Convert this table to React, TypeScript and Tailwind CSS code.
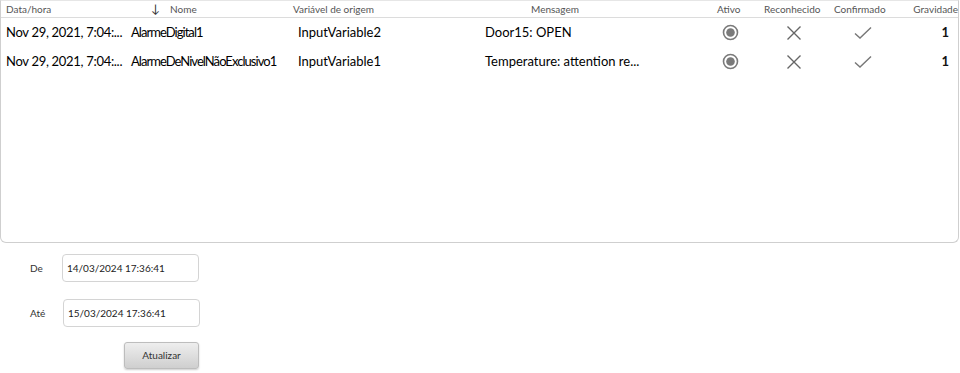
const rows = [
  {
    time: "Nov 29, 2021, 7:04:...",
    name: "AlarmeDigital1",
    source: "InputVariable2",
    message: "Door15: OPEN",
    severity: 1,
  },
  {
    time: "Nov 29, 2021, 7:04:...",
    name: "AlarmeDeNivelNãoExclusivo1",
    source: "InputVariable1",
    message: "Temperature: attention re...",
    severity: 1,
  },
];

function RadioOn() {
  return (
    <svg width="17" height="17" viewBox="0 0 17 17">
      <circle cx="8.5" cy="8.5" r="7" fill="none" stroke="#7a7a7a" strokeWidth="1.6" />
      <circle cx="8.5" cy="8.5" r="4.3" fill="#7a7a7a" />
    </svg>
  );
}

function Cross() {
  return (
    <svg width="16" height="16" viewBox="0 0 16 16">
      <path d="M1.5 1.5 L14.5 14.5 M14.5 1.5 L1.5 14.5" stroke="#666" strokeWidth="1.4" fill="none" />
    </svg>
  );
}

function Check() {
  return (
    <svg width="18" height="14" viewBox="0 0 18 14">
      <path d="M1 7.5 L6 12 L17 1.5" stroke="#777" strokeWidth="1.4" fill="none" />
    </svg>
  );
}

export default function App() {
  return (
    <div className="h-[373px] w-[960px] bg-white font-['Lato',sans-serif] text-black">
      <div className="flex h-[243px] w-[959px] flex-col rounded-b-[6px] border border-t-[#e6e6e6] border-[#cfcfcf]">
        {/* header */}
        <div className="flex h-[17px] items-center border-b border-[#dcdcdc] text-[10px] text-[#555]">
          <div className="w-[127px] pl-[5px]">Data/hora</div>
          <div className="flex w-[165px] items-center pl-[23px]">
            <span className="mr-[10px] text-[12px] text-[#333]">↓</span>Nome
          </div>
          <div className="w-[188px]">Variável de origem</div>
          <div className="w-[220px] pl-[50px]">Mensagem</div>
          <div className="w-[55px] pl-[16px]">Ativo</div>
          <div className="w-[73px] pl-[8px]">Reconhecido</div>
          <div className="w-[67px] pl-[5px]">Confirmado</div>
          <div className="w-[62px] text-right">Gravidade</div>
        </div>
        {rows.map((r) => (
          <div key={r.name} className="flex h-[29px] items-center text-[13px]">
            <div className="w-[127px] whitespace-nowrap pl-[5px] tracking-[-0.3px]">{r.time}</div>
            <div className="w-[165px] whitespace-nowrap pl-[3px] tracking-[-0.95px]">{r.name}</div>
            <div className="w-[188px] pl-[5px]">{r.source}</div>
            <div className="w-[220px] pl-[4px]">{r.message}</div>
            <div className="flex w-[55px] justify-center pl-[3px]">
              <RadioOn />
            </div>
            <div className="flex w-[73px] justify-center pl-[2px]">
              <Cross />
            </div>
            <div className="flex w-[67px] justify-center">
              <Check />
            </div>
            <div className="w-[53px] text-right font-bold text-[#111]">{r.severity}</div>
          </div>
        ))}
      </div>

      <div className="mt-[11px] flex flex-col text-[10px] text-[#333]">
        <div className="flex items-center">
          <span className="w-[62px] pl-[30px]">De</span>
          <div className="flex h-[28px] w-[137px] items-center rounded-[4px] border border-[#d4d4d4] pl-[4px] text-[#222]">
            14/03/2024 17:36:41
          </div>
        </div>
        <div className="mt-[17px] flex items-center">
          <span className="w-[63px] pl-[30px]">Até</span>
          <div className="flex h-[28px] w-[137px] items-center rounded-[4px] border border-[#d4d4d4] pl-[4px] text-[#222]">
            15/03/2024 17:36:41
          </div>
        </div>
        <div className="mt-[15px] flex pl-[124px]">
          <button className="h-[27px] w-[75px] rounded-[3px] border border-[#bdbdbd] bg-gradient-to-b from-[#eeeeee] to-[#cfcfcf] text-[10px] text-[#333] shadow-[0_1px_2px_rgba(0,0,0,0.2)]">
            Atualizar
          </button>
        </div>
      </div>
    </div>
  );
}
